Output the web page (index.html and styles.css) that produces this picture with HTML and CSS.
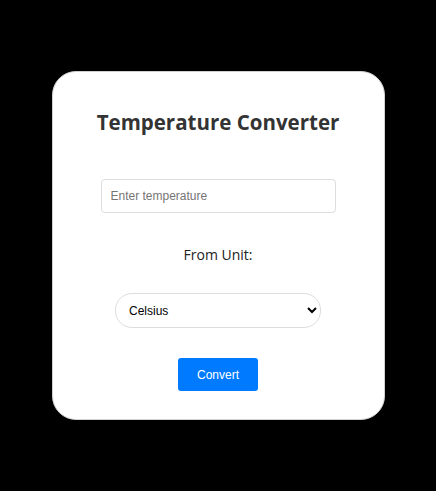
FILE: index.html
```html
<!DOCTYPE html>
<html>
<head>
<meta charset="utf-8">
<link rel="stylesheet" href="styles.css">
</head>
<body>
<div class="card">
  <h2 class="title">Temperature Converter</h2>
  <input class="temp-input" type="text" placeholder="Enter temperature">
  <label class="unit-label">From Unit:</label>
  <select class="unit-select">
    <option>Celsius</option>
    <option>Fahrenheit</option>
    <option>Kelvin</option>
  </select>
  <button class="convert-btn">Convert</button>
</div>
</body>
</html>
```
FILE: styles.css
```css
html, body {
  margin: 0;
  height: 100%;
  background: #000;
}
body {
  display: flex;
  align-items: center;
  justify-content: center;
  font-family: "Open Sans", "Noto Sans", sans-serif;
}
.card {
  box-sizing: border-box;
  width: 333px;
  background: #fff;
  border: 1px solid #d0d0d0;
  border-radius: 24px;
  padding: 35px 20px 28px;
  display: flex;
  flex-direction: column;
  align-items: center;
}
.title {
  margin: 0;
  font-size: 20.5px;
  line-height: 30px;
  font-weight: 700;
  color: #333;
}
.temp-input {
  box-sizing: border-box;
  margin-top: 42px;
  width: 235px;
  height: 34px;
  padding: 0 9px;
  border: 1px solid #ddd;
  border-radius: 4px;
  font-family: "Liberation Sans", Arial, sans-serif;
  font-size: 12px;
  color: #333;
  outline: none;
}
.temp-input::placeholder {
  color: #757575;
}
.unit-label {
  margin-top: 32px;
  font-size: 14px;
  line-height: 20px;
  color: #222;
}
.unit-select {
  box-sizing: border-box;
  margin-top: 28px;
  width: 206px;
  height: 35px;
  padding: 0 9px;
  border: 1px solid #ddd;
  border-radius: 17px;
  background: #fff;
  font-family: "Liberation Sans", Arial, sans-serif;
  font-size: 12px;
  color: #000;
}
.convert-btn {
  box-sizing: border-box;
  margin-top: 30px;
  width: 80px;
  height: 33px;
  border: none;
  border-radius: 3px;
  background: #007bff;
  color: #fff;
  font-family: "Liberation Sans", Arial, sans-serif;
  font-size: 12px;
}
```
